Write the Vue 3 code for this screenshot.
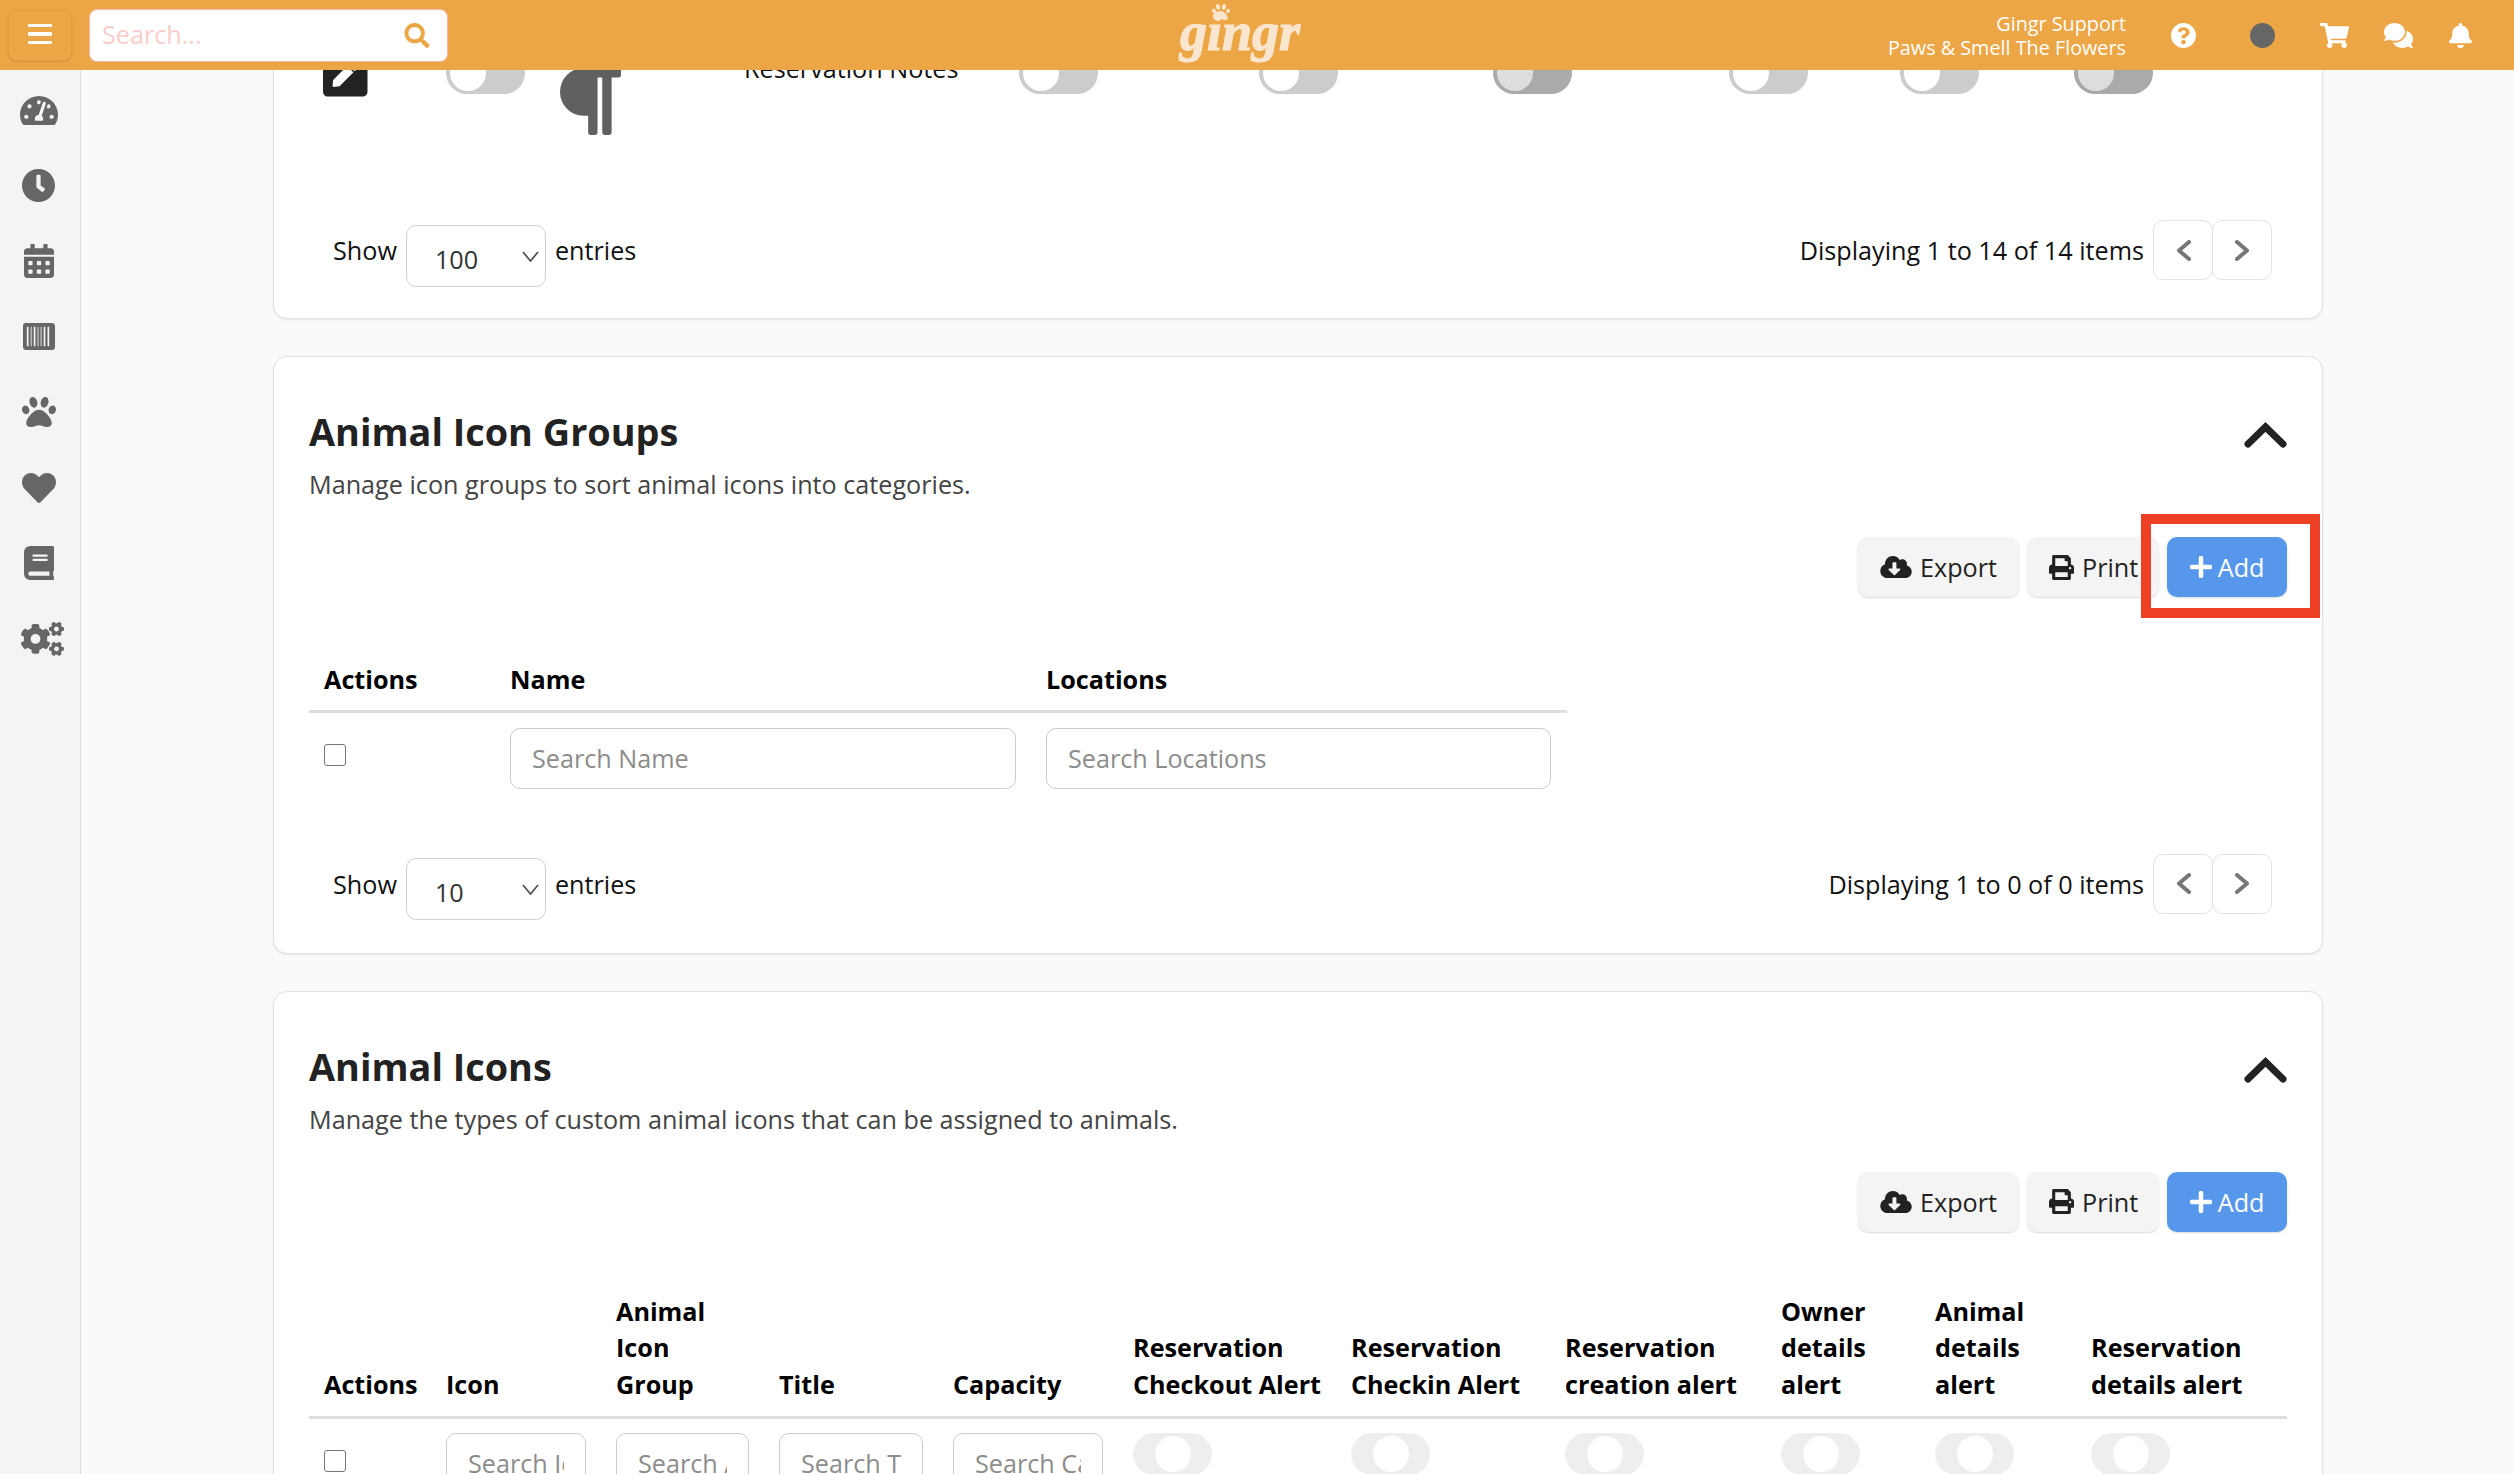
<script setup>
const P = {
  search: 'M505 442.7L405.3 343c-4.5-4.5-10.6-7-17-7H372c27.6-35.3 44-79.7 44-128C416 93.1 322.9 0 208 0S0 93.1 0 208s93.1 208 208 208c48.3 0 92.7-16.4 128-44v16.3c0 6.4 2.5 12.5 7 17l99.7 99.7c9.4 9.4 24.6 9.4 33.9 0l28.3-28.3c9.4-9.4 9.4-24.6.1-34zM208 336c-70.7 0-128-57.2-128-128 0-70.7 57.2-128 128-128 70.7 0 128 57.2 128 128 0 70.7-57.2 128-128 128z',
  question: 'M504 256c0 136.997-111.043 248-248 248S8 392.997 8 256C8 119.083 119.043 8 256 8s248 111.083 248 248zM262.655 90c-54.497 0-89.255 22.957-116.549 63.758-3.536 5.286-2.353 12.415 2.715 16.258l34.699 26.31c5.205 3.947 12.621 3.008 16.665-2.122 17.864-22.658 30.113-35.797 57.303-35.797 20.429 0 45.698 13.148 45.698 32.958 0 14.976-12.363 22.667-32.534 33.976C247.128 238.528 216 254.941 216 296v4c0 6.627 5.373 12 12 12h56c6.627 0 12-5.373 12-12v-1.333c0-28.462 83.186-29.647 83.186-106.667 0-58.002-60.165-102-116.531-102zM256 338c-25.365 0-46 20.635-46 46 0 25.364 20.635 46 46 46s46-20.636 46-46c0-25.365-20.635-46-46-46z',
  cart: 'M528.12 301.319l47.273-208C578.806 78.301 567.391 64 551.99 64H159.208l-9.166-44.81C147.758 8.021 137.93 0 126.529 0H24C10.745 0 0 10.745 0 24v16c0 13.255 10.745 24 24 24h69.883l70.248 343.435C147.325 417.1 136 435.222 136 456c0 30.928 25.072 56 56 56s56-25.072 56-56c0-15.674-6.447-29.835-16.824-40h209.647C430.447 426.165 424 440.326 424 456c0 30.928 25.072 56 56 56s56-25.072 56-56c0-22.172-12.888-41.332-31.579-50.405l5.517-24.276c3.413-15.018-8.002-29.319-23.403-29.319H218.117l-6.545-32h293.145c11.206 0 20.92-7.754 23.403-18.681z',
  comments: 'M416 192c0-88.4-93.1-160-208-160S0 103.6 0 192c0 34.3 14.1 65.9 38 92-13.4 30.2-35.5 54.2-35.8 54.5-2.2 2.3-2.8 5.7-1.5 8.7S4.8 352 8 352c36.6 0 66.9-12.3 88.7-25 32.2 15.7 70.3 25 111.3 25 114.9 0 208-71.6 208-160zm122 220c23.9-26 38-57.7 38-92 0-66.9-53.5-124.2-129.3-148.1.9 6.6 1.3 13.3 1.3 20.1 0 105.9-107.7 192-240 192-10.8 0-21.3-.8-31.7-1.9C207.8 439.6 281.8 480 368 480c41 0 79.1-9.2 111.3-25 21.8 12.7 52.1 25 88.7 25 3.2 0 6.1-1.9 7.3-4.8 1.3-2.9.7-6.3-1.5-8.7-.3-.3-22.4-24.2-35.8-54.5z',
  bell: 'M224 512c35.32 0 63.97-28.65 63.97-64H160.03c0 35.35 28.65 64 63.97 64zm215.39-149.71c-19.32-20.76-55.47-51.99-55.47-154.29 0-77.7-54.48-139.9-127.94-155.16V32c0-17.67-14.32-32-31.98-32s-31.98 14.33-31.98 32v20.84C118.56 68.1 64.08 130.3 64.08 208c0 102.3-36.15 133.53-55.47 154.29-6 6.45-8.66 14.16-8.61 21.71.11 16.4 12.98 32 32.1 32h383.8c19.12 0 32-15.6 32.1-32 .05-7.55-2.61-15.27-8.61-21.71z',
  paw: 'M256 224c-79.41 0-192 122.76-192 200.25 0 34.9 26.81 55.75 71.74 55.75 48.84 0 81.09-25.08 120.26-25.08 39.51 0 71.85 25.08 120.26 25.08 44.93 0 71.74-20.85 71.74-55.75C448 346.76 335.41 224 256 224zm-147.28-12.61c-10.4-34.65-42.44-57.09-71.56-50.13-29.12 6.96-44.29 40.69-33.89 75.34 10.4 34.65 42.44 57.09 71.56 50.13 29.12-6.96 44.29-40.69 33.89-75.34zm84.72-20.78c30.94-8.14 46.42-49.94 34.58-93.36s-46.52-72.01-77.46-63.87-46.42 49.94-34.58 93.36c11.84 43.42 46.52 72.01 77.46 63.87zm281.39-29.34c-29.12-6.96-61.15 15.48-71.56 50.13-10.4 34.65 4.77 68.38 33.89 75.34 29.12 6.96 61.15-15.48 71.56-50.13 10.4-34.65-4.77-68.38-33.89-75.34zm-156.27 29.34c30.94 8.14 65.62-20.45 77.46-63.87 11.84-43.42-3.64-85.21-34.58-93.36s-65.62 20.45-77.46 63.87c-11.84 43.42 3.64 85.22 34.58 93.36z',
  heart: 'M462.3 62.6C407.5 15.9 326 24.3 275.7 76.2L256 96.5l-19.7-20.3C186.1 24.3 104.5 15.9 49.7 62.6c-62.8 53.6-66.1 149.8-9.9 207.9l193.5 199.8c12.5 12.9 32.8 12.9 45.3 0l193.5-199.8c56.3-58.1 53-154.3-9.8-207.9z',
  book: 'M448 360V24c0-13.3-10.7-24-24-24H96C43 0 0 43 0 96v320c0 53 43 96 96 96h328c13.3 0 24-10.7 24-24v-16c0-7.5-3.5-14.3-8.9-18.7-4.2-15.4-4.2-59.3 0-74.7 5.4-4.3 8.9-11.1 8.9-18.6zM128 134c0-3.3 2.7-6 6-6h212c3.3 0 6 2.7 6 6v20c0 3.3-2.7 6-6 6H134c-3.3 0-6-2.7-6-6v-20zm0 64c0-3.3 2.7-6 6-6h212c3.3 0 6 2.7 6 6v20c0 3.3-2.7 6-6 6H134c-3.3 0-6-2.7-6-6v-20zm253.4 250H96c-17.7 0-32-14.3-32-32 0-17.6 14.4-32 32-32h285.4c-1.9 17.1-1.9 46.9 0 64z',
  clock: 'M256,8C119,8,8,119,8,256S119,504,256,504,504,393,504,256,393,8,256,8Zm92.49,313h0l-20,25a16,16,0,0,1-22.49,2.5h0l-67-49.72a40,40,0,0,1-15-31.23V112a16,16,0,0,1,16-16h32a16,16,0,0,1,16,16V256l58,42.5A16,16,0,0,1,348.49,321Z',
  calendar: 'M0 464c0 26.5 21.5 48 48 48h352c26.5 0 48-21.5 48-48V192H0v272zm320-196c0-6.6 5.4-12 12-12h40c6.6 0 12 5.4 12 12v40c0 6.6-5.4 12-12 12h-40c-6.6 0-12-5.4-12-12v-40zm0 128c0-6.6 5.4-12 12-12h40c6.6 0 12 5.4 12 12v40c0 6.6-5.4 12-12 12h-40c-6.6 0-12-5.4-12-12v-40zM192 268c0-6.6 5.4-12 12-12h40c6.6 0 12 5.4 12 12v40c0 6.6-5.4 12-12 12h-40c-6.6 0-12-5.4-12-12v-40zm0 128c0-6.6 5.4-12 12-12h40c6.6 0 12 5.4 12 12v40c0 6.6-5.4 12-12 12h-40c-6.6 0-12-5.4-12-12v-40zM64 268c0-6.6 5.4-12 12-12h40c6.6 0 12 5.4 12 12v40c0 6.6-5.4 12-12 12H76c-6.6 0-12-5.4-12-12v-40zm0 128c0-6.6 5.4-12 12-12h40c6.6 0 12 5.4 12 12v40c0 6.6-5.4 12-12 12H76c-6.6 0-12-5.4-12-12v-40zM400 64h-48V16c0-8.8-7.2-16-16-16h-32c-8.8 0-16 7.2-16 16v48H160V16c0-8.8-7.2-16-16-16h-32c-8.8 0-16 7.2-16 16v48H48C21.5 64 0 85.5 0 112v48h448v-48c0-26.5-21.5-48-48-48z',
  gauge: 'M288 32C128.94 32 0 160.94 0 320c0 52.8 14.25 102.26 39.06 144.8 5.61 9.62 16.3 15.2 27.44 15.2h443c11.14 0 21.83-5.58 27.44-15.2C561.75 422.26 576 372.8 576 320c0-159.06-128.94-288-288-288zm0 64c14.71 0 26.58 10.13 30.32 23.65-1.11 2.26-2.64 4.23-3.45 6.67l-9.22 27.67c-5.13 3.49-10.97 6.01-17.64 6.01-17.67 0-32-14.33-32-32S270.33 96 288 96zM96 384c-17.67 0-32-14.33-32-32s14.33-32 32-32 32 14.33 32 32-14.33 32-32 32zm48-160c-17.67 0-32-14.33-32-32s14.33-32 32-32 32 14.33 32 32-14.33 32-32 32zm246.77-72.41l-61.33 184C343.13 347.33 352 364.54 352 384c0 11.72-3.38 22.55-8.88 32H232.88c-5.5-9.45-8.88-20.28-8.88-32 0-33.94 26.5-61.43 59.9-63.59l61.34-184.01c4.17-12.56 17.73-19.45 30.36-15.17 12.57 4.19 19.35 17.79 15.17 30.36zm14.66 57.2l15.52-46.55c3.47-1.29 7.13-2.23 11.05-2.23 17.67 0 32 14.33 32 32s-14.33 32-32 32c-11.38-.01-20.89-6.28-26.57-15.22zM480 384c-17.67 0-32-14.33-32-32s14.33-32 32-32 32 14.33 32 32-14.33 32-32 32z',
  cogs: 'M512.1 191l-8.2 14.3c-3 5.3-9.4 7.5-15.1 5.4-11.8-4.4-22.6-10.7-32.1-18.6-4.6-3.8-5.8-10.5-2.8-15.7l8.2-14.3c-6.9-8-12.3-17.3-15.9-27.4h-16.5c-6 0-11.2-4.3-12.2-10.3-2-12-2.1-24.6 0-37.1 1-6 6.2-10.4 12.2-10.4h16.5c3.6-10.1 9-19.4 15.9-27.4l-8.2-14.3c-3-5.2-1.9-11.9 2.8-15.7 9.5-7.9 20.4-14.2 32.1-18.6 5.7-2.1 12.1.1 15.1 5.4l8.2 14.3c10.5-1.9 21.2-1.9 31.7 0L552 6.3c3-5.3 9.4-7.5 15.1-5.4 11.8 4.4 22.6 10.7 32.1 18.6 4.6 3.8 5.8 10.5 2.8 15.7l-8.2 14.3c6.9 8 12.3 17.3 15.9 27.4h16.5c6 0 11.2 4.3 12.2 10.3 2 12 2.1 24.6 0 37.1-1 6-6.2 10.4-12.2 10.4h-16.5c-3.6 10.1-9 19.4-15.9 27.4l8.2 14.3c3 5.2 1.9 11.9-2.8 15.7-9.5 7.9-20.4 14.2-32.1 18.6-5.7 2.1-12.1-.1-15.1-5.4l-8.2-14.3c-10.4 1.9-21.2 1.9-31.7 0zm-10.5-58.8c38.5 29.6 82.4-14.3 52.8-52.8-38.5-29.7-82.4 14.3-52.8 52.8zM386.3 286.1l33.7 16.8c10.1 5.8 14.5 18.1 10.5 29.1-8.9 24.2-26.4 46.4-42.6 65.8-7.4 8.9-20.2 11.1-30.3 5.3l-29.1-16.8c-16 13.7-34.6 24.6-54.9 31.7v33.6c0 11.6-8.3 21.6-19.7 23.6-24.6 4.2-50.4 4.4-75.9 0-11.5-2-20-11.9-20-23.6V418c-20.3-7.2-38.9-18-54.9-31.7L74 403c-10 5.8-22.9 3.6-30.3-5.3-16.2-19.4-33.3-41.6-42.2-65.7-4-10.9.4-23.2 10.5-29.1l33.3-16.8c-3.9-20.9-3.9-42.4 0-63.4L12 205.8c-10.1-5.8-14.6-18.1-10.5-29 8.9-24.2 26-46.4 42.2-65.8 7.4-8.9 20.2-11.1 30.3-5.3l29.1 16.8c16-13.7 34.6-24.6 54.9-31.7V57.1c0-11.5 8.2-21.5 19.6-23.5 24.6-4.2 50.5-4.4 76-.1 11.5 2 20 11.9 20 23.6v33.6c20.3 7.2 38.9 18 54.9 31.7l29.1-16.8c10-5.8 22.9-3.6 30.3 5.3 16.2 19.4 33.2 41.6 42.1 65.8 4 10.9.1 23.2-10 29.1l-33.7 16.8c3.9 21 3.9 42.5 0 63.5zm-117.6 21.1c59.2-77-28.7-164.9-105.7-105.7-59.2 77 28.7 164.9 105.7 105.7zm243.4 182.7l-8.2 14.3c-3 5.3-9.4 7.5-15.1 5.4-11.8-4.4-22.6-10.7-32.1-18.6-4.6-3.8-5.8-10.5-2.8-15.7l8.2-14.3c-6.9-8-12.3-17.3-15.9-27.4h-16.5c-6 0-11.2-4.3-12.2-10.3-2-12-2.1-24.6 0-37.1 1-6 6.2-10.4 12.2-10.4h16.5c3.6-10.1 9-19.4 15.9-27.4l-8.2-14.3c-3-5.2-1.9-11.9 2.8-15.7 9.5-7.9 20.4-14.2 32.1-18.6 5.7-2.1 12.1.1 15.1 5.4l8.2 14.3c10.5-1.9 21.2-1.9 31.7 0l8.2-14.3c3-5.3 9.4-7.5 15.1-5.4 11.8 4.4 22.6 10.7 32.1 18.6 4.6 3.8 5.8 10.5 2.8 15.7l-8.2 14.3c6.9 8 12.3 17.3 15.9 27.4h16.5c6 0 11.2 4.3 12.2 10.3 2 12 2.1 24.6 0 37.1-1 6-6.2 10.4-12.2 10.4h-16.5c-3.6 10.1-9 19.4-15.9 27.4l8.2 14.3c3 5.2 1.9 11.9-2.8 15.7-9.5 7.9-20.4 14.2-32.1 18.6-5.7 2.1-12.1-.1-15.1-5.4l-8.2-14.3c-10.4 1.9-21.2 1.9-31.7 0zM501.6 431c38.5 29.6 82.4-14.3 52.8-52.8-38.5-29.6-82.4 14.3-52.8 52.8z',
  cloud: 'M537.6 226.6c4.1-10.7 6.4-22.4 6.4-34.6 0-53-43-96-96-96-19.7 0-38.1 6-53.3 16.2C367 64.2 315.3 32 256 32c-88.4 0-160 71.6-160 160 0 2.7.1 5.4.2 8.1C40.2 219.8 0 273.2 0 336c0 79.5 64.5 144 144 144h368c70.7 0 128-57.3 128-128 0-61.9-44-113.6-102.4-125.4zm-132.9 88.7L299.3 420.7c-6.2 6.2-16.4 6.2-22.6 0L171.3 315.3c-10.1-10.1-2.9-27.3 11.3-27.3H248V176c0-8.8 7.2-16 16-16h48c8.8 0 16 7.2 16 16v112h65.4c14.2 0 21.4 17.2 11.3 27.3z',
  print: 'M448 192V77.25c0-8.49-3.37-16.62-9.37-22.63L393.37 9.37c-6-6-14.14-9.37-22.63-9.37H96C78.33 0 64 14.33 64 32v160c-35.35 0-64 28.65-64 64v112c0 8.84 7.16 16 16 16h48v96c0 17.67 14.33 32 32 32h320c17.67 0 32-14.33 32-32v-96h48c8.84 0 16-7.16 16-16V256c0-35.35-28.65-64-64-64zm-64 256H128v-96h256v96zm0-224H128V64h192v48c0 8.84 7.16 16 16 16h48v96zm48 72c-13.25 0-24-10.75-24-24 0-13.26 10.75-24 24-24s24 10.74 24 24c0 13.25-10.75 24-24 24z',
  edit: 'M400 480H48c-26.5 0-48-21.5-48-48V80c0-26.5 21.5-48 48-48h352c26.5 0 48 21.5 48 48v352c0 26.5-21.5 48-48 48zM238.1 177.9L102.4 313.6l-6.3 57.1c-.8 7.6 5.6 14.1 13.3 13.3l57.1-6.3L302.2 242c2.3-2.3 2.3-6.1 0-8.5L246.7 178c-2.5-2.4-6.3-2.4-8.6-.1zM345 165.1L314.9 135c-9.4-9.4-24.6-9.4-33.9 0l-23.1 23.1c-2.3 2.3-2.3 6.1 0 8.5l55.5 55.5c2.3 2.3 6.1 2.3 8.5 0L345 199c9.3-9.3 9.3-24.5 0-33.9z',
  para: 'M448 48v32a16 16 0 0 1-16 16h-48v368a16 16 0 0 1-16 16h-32a16 16 0 0 1-16-16V96h-32v368a16 16 0 0 1-16 16h-32a16 16 0 0 1-16-16V352h-32a160 160 0 0 1 0-320h240a16 16 0 0 1 16 16z',
  barcode: 'M72 0h368a48 48 0 0 1 48 48v330a48 48 0 0 1-48 48H72a48 48 0 0 1-48-48V48A48 48 0 0 1 72 0zM80 60v306h24V60zm56 0v306h12V60zm44 0v306h24V60zm56 0v306h12V60zm44 0v306h12V60zm44 0v306h24V60zm56 0v306h24V60z',
}

const sideIcons = [
  { p: P.gauge, vb: '0 32 576 448', w: 38, h: 29 },
  { p: P.clock, vb: '8 8 496 496', w: 33, h: 33 },
  { p: P.calendar, vb: '0 0 448 512', w: 30, h: 34 },
  { p: P.barcode, vb: '24 0 464 426', w: 32, h: 27 },
  { p: P.paw, vb: '0 32 512 448', w: 34, h: 30 },
  { p: P.heart, vb: '0 32 512 448', w: 34, h: 30 },
  { p: P.book, vb: '0 0 448 512', w: 30, h: 34 },
  { p: P.cogs, vb: '0 0 640 512', w: 43, h: 34, shift: true },
]

const topIcons = [
  { p: P.question, vb: '8 8 496 496', w: 25, h: 25, gap: 54 },
  { dot: true, gap: 45 },
  { p: P.cart, vb: '0 0 576 512', w: 29, h: 25, gap: 35 },
  { p: P.comments, vb: '0 32 576 448', w: 29, h: 25, gap: 36 },
  { p: P.bell, vb: '0 0 448 512', w: 23, h: 25, gap: 0 },
]

const iconHeaders = [
  { w: 123, lines: ['Actions'], check: true },
  { w: 170, lines: ['Icon'], ph: 'Search Icon' },
  { w: 163, lines: ['Animal', 'Icon', 'Group'], ph: 'Search Animal Icon Group' },
  { w: 174, lines: ['Title'], ph: 'Search Title' },
  { w: 180, lines: ['Capacity'], ph: 'Search Capacity' },
  { w: 218, lines: ['Reservation', 'Checkout Alert'], toggle: true },
  { w: 214, lines: ['Reservation', 'Checkin Alert'], toggle: true },
  { w: 216, lines: ['Reservation', 'creation alert'], toggle: true },
  { w: 154, lines: ['Owner', 'details', 'alert'], toggle: true },
  { w: 156, lines: ['Animal', 'details', 'alert'], toggle: true },
  { w: 210, lines: ['Reservation', 'details alert'], toggle: true },
]
</script>

<template>
  <div class="page">
    <header class="topbar">
      <div class="top-left">
        <button class="menu-btn" aria-label="Menu">
          <span></span><span></span><span></span>
        </button>
        <div class="search">
          <input class="search-input" placeholder="Search..." />
          <svg class="search-icon" viewBox="0 0 512 512"><path :d="P.search" /></svg>
        </div>
      </div>
      <div class="logo">
        <svg class="logo-paw" viewBox="0 32 512 448"><path :d="P.paw" /></svg>
        <span class="logo-text">gingr</span>
      </div>
      <div class="top-right">
        <div class="user">
          <div>Gingr Support</div>
          <div>Paws &amp; Smell The Flowers</div>
        </div>
        <div class="top-icons">
          <template v-for="(ic, i) in topIcons" :key="i">
            <span v-if="ic.dot" class="avatar" :style="{ marginRight: ic.gap + 'px' }"></span>
            <svg v-else :viewBox="ic.vb" :style="{ width: ic.w + 'px', height: ic.h + 'px', marginRight: ic.gap + 'px' }" preserveAspectRatio="none"><path :d="ic.p" /></svg>
          </template>
        </div>
      </div>
    </header>

    <div class="body">
      <aside class="sidebar">
        <div v-for="(ic, i) in sideIcons" :key="i" class="side-item" :class="{ shifted: ic.shift }">
          <svg :viewBox="ic.vb" :style="{ width: ic.w + 'px', height: ic.h + 'px' }" preserveAspectRatio="none"><path :d="ic.p" fill-rule="evenodd" /></svg>
        </div>
      </aside>

      <main class="main">
        <section class="card card-first">
          <div class="clipped-row">
            <div class="cell c-edit"><svg viewBox="0 32 448 448" class="edit-icon"><path :d="P.edit" /></svg></div>
            <div class="cell c-tog"><span class="toggle"><i></i></span></div>
            <div class="cell c-para"><svg viewBox="32 32 416 448" class="para-icon" preserveAspectRatio="none"><path :d="P.para" /></svg></div>
            <div class="cell c-note">Reservation Notes</div>
            <div class="cell w240"><span class="toggle"><i></i></span></div>
            <div class="cell w234"><span class="toggle"><i></i></span></div>
            <div class="cell w236"><span class="toggle dark"><i></i></span></div>
            <div class="cell w171"><span class="toggle"><i></i></span></div>
            <div class="cell w174"><span class="toggle"><i></i></span></div>
            <div class="cell"><span class="toggle dark"><i></i></span></div>
          </div>
          <div class="pager-row first-pager">
            <div class="show">
              <span>Show</span>
              <span class="select-wrap">
                <select class="select"><option>100</option></select>
                <svg class="select-chev" viewBox="0 0 17 11"><polyline points="1,1 8.5,10 16,1" /></svg>
              </span>
              <span class="entries">entries</span>
            </div>
            <div class="paging">
              <span class="paging-text">Displaying 1 to 14 of 14 items</span>
              <button class="page-btn" aria-label="Previous"><svg viewBox="0 0 15 21"><polyline points="13,2 3,10.5 13,19" /></svg></button>
              <button class="page-btn" aria-label="Next"><svg viewBox="0 0 15 21"><polyline points="2,2 12,10.5 2,19" /></svg></button>
            </div>
          </div>
        </section>

        <section class="card">
          <div class="card-head">
            <div>
              <h2 class="title">Animal Icon Groups</h2>
              <p class="sub">Manage icon groups to sort animal icons into categories.</p>
            </div>
            <svg class="collapse" viewBox="0 0 43 26"><polyline points="4,22 21.5,5 39,22" /></svg>
          </div>
          <div class="toolbar">
            <button class="btn btn-export"><svg class="i-cloud" viewBox="0 32 640 448"><path :d="P.cloud" /></svg>Export</button>
            <button class="btn btn-print"><svg class="i-print" viewBox="0 0 512 512"><path :d="P.print" /></svg>Print</button>
            <span class="add-wrap">
              <button class="btn btn-add"><svg class="i-plus" viewBox="0 0 22 22"><path d="M11 2v18M2 11h18" /></svg>Add</button>
              <span class="callout"></span>
            </span>
          </div>
          <table class="tbl tbl-groups">
            <colgroup><col style="width:187px" /><col style="width:536px" /><col style="width:535px" /></colgroup>
            <thead><tr><th>Actions</th><th>Name</th><th>Locations</th></tr></thead>
            <tbody>
              <tr>
                <td class="td-check"><input type="checkbox" class="check" /></td>
                <td><input class="field" placeholder="Search Name" /></td>
                <td><input class="field" placeholder="Search Locations" /></td>
              </tr>
            </tbody>
          </table>
          <div class="pager-row">
            <div class="show">
              <span>Show</span>
              <span class="select-wrap">
                <select class="select"><option>10</option></select>
                <svg class="select-chev" viewBox="0 0 17 11"><polyline points="1,1 8.5,10 16,1" /></svg>
              </span>
              <span class="entries">entries</span>
            </div>
            <div class="paging">
              <span class="paging-text">Displaying 1 to 0 of 0 items</span>
              <button class="page-btn" aria-label="Previous"><svg viewBox="0 0 15 21"><polyline points="13,2 3,10.5 13,19" /></svg></button>
              <button class="page-btn" aria-label="Next"><svg viewBox="0 0 15 21"><polyline points="2,2 12,10.5 2,19" /></svg></button>
            </div>
          </div>
        </section>

        <section class="card">
          <div class="card-head">
            <div>
              <h2 class="title">Animal Icons</h2>
              <p class="sub">Manage the types of custom animal icons that can be assigned to animals.</p>
            </div>
            <svg class="collapse" viewBox="0 0 43 26"><polyline points="4,22 21.5,5 39,22" /></svg>
          </div>
          <div class="toolbar">
            <button class="btn btn-export"><svg class="i-cloud" viewBox="0 32 640 448"><path :d="P.cloud" /></svg>Export</button>
            <button class="btn btn-print"><svg class="i-print" viewBox="0 0 512 512"><path :d="P.print" /></svg>Print</button>
            <button class="btn btn-add"><svg class="i-plus" viewBox="0 0 22 22"><path d="M11 2v18M2 11h18" /></svg>Add</button>
          </div>
          <table class="tbl tbl-icons">
            <colgroup><col v-for="(h, i) in iconHeaders" :key="i" :style="{ width: h.w + 'px' }" /></colgroup>
            <thead>
              <tr>
                <th v-for="(h, i) in iconHeaders" :key="i">
                  <div v-for="l in h.lines" :key="l">{{ l }}</div>
                </th>
              </tr>
            </thead>
            <tbody>
              <tr>
                <td v-for="(h, i) in iconHeaders" :key="i" :class="{ 'td-check': h.check }">
                  <input v-if="h.check" type="checkbox" class="check" />
                  <input v-else-if="h.ph" class="field" :placeholder="h.ph" />
                  <span v-else class="toggle ghost"><i></i></span>
                </td>
              </tr>
            </tbody>
          </table>
        </section>
      </main>
    </div>
  </div>
</template>

<style>
html, body { margin: 0; padding: 0; background: #fafafa; overflow: hidden; }
</style>

<style scoped>
.page {
  width: 2514px;
  height: 1474px;
  display: flex;
  flex-direction: column;
  overflow: hidden;
  font-family: "Open Sans", "Liberation Sans", sans-serif;
  font-size: 25.2px;
  color: #111;
}
.topbar {
  flex: none;
  height: 70px;
  background: #eca646;
  display: grid;
  grid-template-columns: 1180px 119px 1fr;
  position: relative;
  z-index: 2;
}
.top-left { display: flex; align-items: center; gap: 17px; padding-left: 8px; }
.menu-btn {
  width: 64px;
  height: 51px;
  border: 1px solid #e39c3f;
  border-radius: 8px;
  background: #eca646;
  box-shadow: 0 1px 2px rgba(0, 0, 0, .12);
  display: flex;
  flex-direction: column;
  align-items: center;
  justify-content: center;
  gap: 5px;
  padding: 0 0 2px;
}
.menu-btn span { display: block; width: 24px; height: 3.5px; background: #fff; border-radius: 1px; }
.search {
  width: 359px;
  height: 53px;
  box-sizing: border-box;
  background: #fff;
  border: 1px solid #f3b9b3;
  border-radius: 8px;
  display: flex;
  align-items: center;
  padding: 0 17px 0 12px;
}
.search-input {
  flex: 1;
  min-width: 0;
  border: 0;
  outline: 0;
  padding: 0 0 2px;
  font: 25.2px "Open Sans", sans-serif;
  background: transparent;
}
.search-input::placeholder { color: #f9cdc9; opacity: 1; }
.search-icon { width: 26px; height: 25px; fill: #eca646; flex: none; }
.logo { position: relative; color: #fae6cf; }
.logo-paw { position: absolute; left: 32px; top: 4px; width: 18px; height: 16px; fill: #fae6cf; }
.logo-text {
  position: absolute;
  left: 0;
  top: 0;
  width: 119px;
  text-align: center;
  font: italic 700 54px/64px "Liberation Serif", serif;
  -webkit-text-stroke: 1.2px #fae6cf;
}
.top-right { display: flex; justify-content: flex-end; align-items: center; padding-right: 42px; }
.user { color: #fff; font-size: 19.8px; line-height: 24px; text-align: right; margin: 2px 45px 0 0; }
.top-icons { display: flex; align-items: center; }
.top-icons svg { fill: #fff; flex: none; }
.avatar { width: 25px; height: 25px; border-radius: 50%; background: #666; flex: none; }

.body { flex: 1; min-height: 0; display: flex; }
.sidebar {
  flex: none;
  width: 80px;
  box-sizing: content-box;
  background: #f4f4f4;
  border-right: 1px solid #ddd;
  padding-top: 2.5px;
}
.side-item { height: 75.5px; width: 77px; display: flex; align-items: center; justify-content: center; }
.side-item.shifted { width: 85px; }
.side-item svg { fill: #666; }

.main {
  flex: 1;
  min-width: 0;
  padding: 0 191px 0 192px;
  overflow: hidden;
}
.card {
  box-sizing: border-box;
  width: 2050px;
  background: #fff;
  border: 1px solid #e2e2e2;
  border-radius: 14px;
  box-shadow: 0 1px 2px rgba(0, 0, 0, .08);
  padding: 0 35px 33px;
  margin-bottom: 37px;
}
.card-first { margin-top: -70px; height: 319px; }
.clipped-row { display: flex; align-items: flex-start; padding-top: 51px; height: 85px; }
.cell { flex: none; box-sizing: border-box; padding-left: 14px; }
.c-edit { width: 123px; }
.edit-icon { width: 44.5px; height: 44.5px; fill: #222; display: block; }
.c-tog { width: 114px; }
.c-para { width: 184px; }
.para-icon { width: 61px; height: 67px; fill: #606060; margin-top: 16px; display: block; }
.c-note { width: 275px; line-height: 36px; margin-top: -2px; }
.w240 { width: 240px; }
.w234 { width: 234px; }
.w236 { width: 236px; }
.w171 { width: 171px; }
.w174 { width: 174px; }
.toggle {
  display: block;
  width: 79px;
  height: 42px;
  border-radius: 21px;
  background: #ccc;
  position: relative;
}
.toggle i {
  position: absolute;
  left: 4px;
  top: 3px;
  width: 36px;
  height: 36px;
  border-radius: 50%;
  background: #fff;
}
.toggle.dark { background: #aaa; }
.toggle.dark i { background: #ddd; }
.toggle.ghost { background: #eee; }
.toggle.ghost i { left: 21.5px; }

.pager-row {
  display: flex;
  justify-content: space-between;
  align-items: flex-start;
  margin-top: 65px;
  padding: 0 16px 0 24px;
}
.first-pager { margin-top: 83px; }
.show { display: flex; align-items: flex-start; line-height: 60px; height: 66px; }
.select-wrap { position: relative; display: block; width: 140px; height: 62px; margin: 4px 9px 0 9px; }
.first-pager .select-wrap { margin-top: 5px; }
.select {
  appearance: none;
  -webkit-appearance: none;
  box-sizing: border-box;
  width: 100%;
  height: 100%;
  padding: 6px 0 0 28px;
  border: 1px solid #d0d0d0;
  border-radius: 10px;
  background: #fff;
  font: 25.2px "Open Sans", sans-serif;
  color: #333;
}
.select-chev { position: absolute; right: 7px; top: 26px; width: 17px; height: 11px; fill: none; stroke: #555; stroke-width: 1.8; }
.entries { display: block; }
.paging { display: flex; align-items: center; height: 60px; }
.paging-text { margin-right: 9px; }
.page-btn {
  width: 60px;
  height: 60px;
  box-sizing: border-box;
  margin-right: -1px;
  background: #fff;
  border: 1px solid #e2e2e2;
  border-radius: 10px;
  padding: 0;
  display: flex;
  align-items: center;
  justify-content: center;
}
.page-btn svg { width: 15px; height: 21px; fill: none; stroke: #777; stroke-width: 4; stroke-linecap: round; stroke-linejoin: round; }

.card-head { display: flex; justify-content: space-between; align-items: flex-start; padding-top: 51px; }
.title { margin: 0; font-size: 37.8px; line-height: 48px; font-weight: 700; color: #222; }
.sub { margin: 10px 0 0; font-size: 25.2px; line-height: 36px; color: #444; }
.collapse { width: 43px; height: 26px; margin-top: 14px; fill: none; stroke: #222; stroke-width: 7; stroke-linecap: round; }
.toolbar { display: flex; justify-content: flex-end; gap: 8px; margin-top: 35px; }
.btn {
  height: 60px;
  box-sizing: border-box;
  display: flex;
  align-items: center;
  gap: 8px;
  padding: 0 23px;
  border: 0;
  border-radius: 10px;
  background: #f4f4f4;
  box-shadow: 0 1px 2px rgba(0, 0, 0, .15);
  font: 25.2px "Open Sans", sans-serif;
  color: #222;
}
.btn-export { padding: 0 22px; }
.btn-print { padding: 0 21px 0 22px; }
.btn-add { background: #5797eb; color: #fff; padding: 0 22.5px; gap: 6px; }
.i-cloud { width: 32px; height: 22px; fill: #222; }
.i-print { width: 25px; height: 25px; fill: #222; }
.i-plus { width: 22px; height: 22px; fill: none; stroke: #fff; stroke-width: 4.5; stroke-linecap: round; }
.add-wrap { position: relative; display: flex; }
.callout {
  position: absolute;
  left: -26px;
  top: -23px;
  width: 179px;
  height: 104px;
  box-sizing: border-box;
  border: 10px solid #ee4024;
  pointer-events: none;
}
.tbl { table-layout: fixed; border-collapse: collapse; margin-top: 64px; width: 1978px; }
.tbl-groups { width: 1258px; }
.tbl-groups th { padding-bottom: 12px; }
.tbl-icons { margin-top: 61px; }
.tbl-icons td { padding-top: 14px; }
.tbl-icons td.td-check { padding-top: 31px; }
th {
  text-align: left;
  vertical-align: bottom;
  font-weight: 700;
  line-height: 36.5px;
  padding: 0 0 13.5px 14px;
  border-bottom: 3px solid #ddd;
  color: #000;
  white-space: nowrap;
}
th:first-child { padding-left: 15px; }
td { padding: 15px 16px 0 14px; vertical-align: top; }
td:first-child { padding-left: 15px; }
.td-check { padding-top: 31px; }
.check {
  display: block;
  appearance: none;
  -webkit-appearance: none;
  width: 22px;
  height: 22px;
  margin: 0;
  box-sizing: border-box;
  border: 1.5px solid #767676;
  border-radius: 3px;
  background: #fff;
}
.field {
  display: block;
  width: 100%;
  height: 61px;
  box-sizing: border-box;
  padding: 0 21px;
  border: 1px solid #ccc;
  border-radius: 10px;
  background: #fff;
  font: 25.2px "Open Sans", sans-serif;
  outline: 0;
}
.field::placeholder { color: #8c8c8c; opacity: 1; }
</style>
